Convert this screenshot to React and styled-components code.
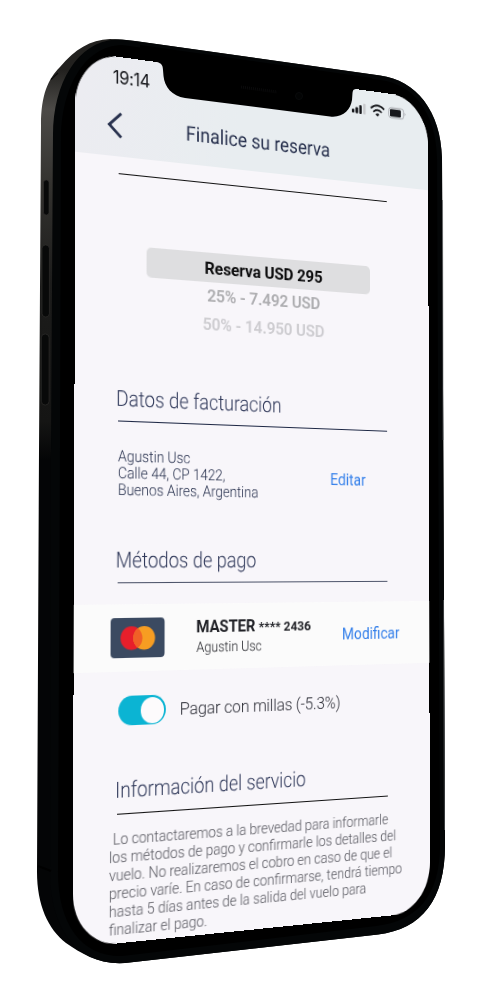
import React from "react";
import styled, { createGlobalStyle } from "styled-components";

const W = 390;
const H = 844;

// Solves the projective transform that carries the flat W x H screen onto a quad.
function quadMatrix([x0, y0], [x1, y1], [x2, y2], [x3, y3]) {
  const dx1 = x1 - x2, dx2 = x3 - x2, dx3 = x0 - x1 + x2 - x3;
  const dy1 = y1 - y2, dy2 = y3 - y2, dy3 = y0 - y1 + y2 - y3;
  const det = dx1 * dy2 - dx2 * dy1;
  const g = (dx3 * dy2 - dx2 * dy3) / det;
  const h = (dx1 * dy3 - dx3 * dy1) / det;
  const m = [
    (x1 - x0 + g * x1) / W, (y1 - y0 + g * y1) / W, 0, g / W,
    (x3 - x0 + h * x3) / H, (y3 - y0 + h * y3) / H, 0, h / H,
    0, 0, 1, 0,
    x0, y0, 0, 1,
  ];
  return `matrix3d(${m.map((n) => n.toFixed(9)).join(",")})`;
}

const tilt = quadMatrix([75.6, 51], [428, 98.9], [430, 911.5], [72.7, 948]);

const Global = createGlobalStyle`
  body { margin: 0; background: #fff; }
  * { box-sizing: border-box; }
`;

const Stage = styled.main`
  position: relative;
  width: 500px;
  height: 1000px;
  overflow: hidden;
  background: #fff;
  font-family: Roboto, "Liberation Sans", sans-serif;
`;

const Layer = styled.svg`
  position: absolute;
  inset: 0;
  width: 500px;
  height: 1000px;
`;

const Screen = styled.div`
  position: absolute;
  top: 0;
  left: 0;
  width: ${W}px;
  height: ${H}px;
  display: flex;
  flex-direction: column;
  overflow: hidden;
  border-radius: 45px / 50px;
  background: #f8f6fa;
  color: #27304d;
  white-space: nowrap;
  transform-origin: 0 0;
  transform: ${tilt};
`;

const Header = styled.header`
  height: 96.3px;
  flex: none;
  background: linear-gradient(100deg, #ececf1, #e8edf0 45%);
`;

const StatusBar = styled.div`
  height: 40px;
  padding: 0 27.5px 0 37.8px;
  display: flex;
  align-items: center;
  justify-content: space-between;
`;

const Clock = styled.span`
  font: 400 17px/20px Inter, Roboto, sans-serif;
  letter-spacing: -0.4px;
  color: #15161a;
`;

const NavBar = styled.div`
  height: 51px;
  padding-left: 31.5px;
  display: flex;
  align-items: center;
`;

const Title = styled.h1`
  margin: 0 0 0 66.8px;
  font-size: 20px;
  line-height: 26px;
  font-weight: 400;
  transform: scaleX(0.965);
  transform-origin: 0 50%;
`;

const Rule = styled.hr`
  margin: ${(p) => p.$top || 0}px 50.5px 0 43.5px;
  border: 0;
  height: ${(p) => p.$weight || 1.2}px;
  flex: none;
  background: ${(p) => p.$color || "#1d2744"};
`;

const Picker = styled.div`
  width: 247px;
  margin: 68px 0 0 72.8px;
  text-align: center;
`;

const Option = styled.div`
  height: ${(p) => (p.$selected ? 29.5 : 27.7)}px;
  line-height: ${(p) => (p.$selected ? 30 : 27.7)}px;
  padding-left: 6.5px;
  border-radius: 5px;
  background: ${(p) => (p.$selected ? "#dedee0" : "transparent")};
  color: ${(p) => p.$color};
  font-size: 17px;
  font-weight: ${(p) => (p.$selected ? 700 : 600)};
  letter-spacing: -0.13px;
`;

const Heading = styled.h2`
  margin: ${(p) => p.$top}px 0 8.3px 42.3px;
  color: #30395a;
  font-size: 21px;
  line-height: 26px;
  font-weight: 300;
  transform: scaleX(0.925);
  transform-origin: 0 50%;
`;

const Billing = styled.div`
  margin: 24.8px 0 0 43.5px;
  display: flex;
  align-items: center;
`;

const Address = styled.address`
  width: 230px;
  font-style: normal;
  font-weight: 300;
  font-size: 15px;
  line-height: 16.3px;
  transform: scaleX(0.955);
  transform-origin: 0 50%;
`;

const Link = styled.a`
  color: #3580ea;
  font-size: 16px;
  line-height: 18px;
  padding-top: ${(p) => p.$drop || 0}px;
`;

const CardRow = styled.div`
  height: 64px;
  margin-top: 19.5px;
  padding-left: 37px;
  display: flex;
  align-items: center;
  background: #fbfbfb;
`;

const CardText = styled.div`
  width: 161px;
  margin-left: 33.3px;
  color: #202126;
`;

const CardName = styled.div`
  font-size: 16px;
  line-height: 20px;
  font-weight: 700;
  letter-spacing: -0.05px;
`;

const Digits = styled.span`
  font-size: 13.4px;
`;

const Holder = styled.div`
  font-size: 14px;
  line-height: 16px;
  font-weight: 300;
  transform: scaleX(0.96);
  transform-origin: 0 50%;
`;

const MilesRow = styled.label`
  margin: 23.5px 0 0 45px;
  height: 28px;
  display: flex;
  align-items: center;
  gap: 14.5px;
  color: #2b2c35;
  font-size: 17px;
  font-weight: 300;
  letter-spacing: -0.13px;
`;

const Switch = styled.span`
  width: 49px;
  height: 28px;
  padding: 1.7px;
  display: flex;
  justify-content: flex-end;
  border-radius: 14px;
  background: #0bb4d3;
`;

const Knob = styled.span`
  width: 24.6px;
  height: 24.6px;
  border-radius: 50%;
  background: #fdfbfc;
`;

const Notice = styled.p`
  margin: 15.6px 0 0 36px;
  color: #56565e;
  font-size: 15px;
  line-height: 17px;
  font-weight: 300;
  transform: scaleX(0.955);
  transform-origin: 0 50%;
`;

const Line = styled.span`
  display: block;
  text-indent: ${(p) => (p.$first ? 4 : 0)}px;
`;

const StatusIcons = () => (
  <svg width="64" height="16" viewBox="0 0 64 16">
    <g fill="#17181c">
      <rect x="0" y="8.5" width="3" height="4" rx="1" />
      <rect x="4.3" y="6.5" width="3" height="6.2" rx="1" />
      <rect x="8.7" y="4" width="3" height="8.9" rx="1" />
      <rect x="13.2" y="2" width="3" height="11" rx="1" fill="#c9cacd" />
    </g>
    <g fill="none" stroke="#17181c" strokeWidth="1.8">
      <path d="M22.2 5.5q8-7 16 0" />
      <path d="M25.2 8.9q5-4.3 10 0" />
    </g>
    <path d="M27.8 11.2q2.4-1.8 4.8 0l-2.4 2.4z" fill="#17181c" />
    <rect x="43.6" y="2.3" width="18" height="10.6" rx="3" fill="none" stroke="#a9abb0" strokeWidth="1" />
    <rect x="45" y="3.8" width="13" height="7.8" rx="1.4" fill="#17181c" />
    <path d="M62.6 5.8q1.8 1.8 0 3.6z" fill="#a9abb0" />
  </svg>
);

const Back = () => (
  <svg width="16" height="26" viewBox="0 0 16 26" fill="none" stroke="#27304d" strokeWidth="2.8">
    <path d="M14.5 1.5 2.3 13l12.2 11.5" />
  </svg>
);

const Mastercard = () => (
  <svg width="55.500" height="38" viewBox="0 0 56 38" preserveAspectRatio="none">
    <rect width="56" height="38" rx="4" fill="#3b4a61" />
    <circle cx="21.5" cy="19.3" r="11.3" fill="#e71f2b" />
    <circle cx="34.7" cy="19.3" r="11.3" fill="#f79d22" />
    <path d="M28.1 10.1a11.3 11.3 0 0 1 0 18.4a11.3 11.3 0 0 1 0-18.4" fill="#f06027" />
  </svg>
);

const Chassis = () => (
  <Layer viewBox="0 0 500 1000">
    <defs>
      <linearGradient id="side" x1="0" y1="70" x2="0" y2="460" gradientUnits="userSpaceOnUse">
        <stop offset="0" stopColor="#22211f" />
        <stop offset=".1" stopColor="#4c4a47" />
        <stop offset=".3" stopColor="#33322f" />
        <stop offset=".55" stopColor="#1c1c1b" />
        <stop offset=".9" stopColor="#151514" />
        <stop offset="1" stopColor="#040506" />
      </linearGradient>
    </defs>
    <path
      d="M41 125C41 95 48 79 60 67C75 49 90 40 110 39Q122 39 135 41L380 75.5C416 80 441 111 442 158L445 845C445 900 422 929 378 934.5L125 963C100 965 82 954 66 943C48 929 37 905 37 872L39 450Z"
      fill="url(#side)"
    />
    <path
      d="M53 135C53 83 78 42 115 39.5Q122 39 135 41L380 75.5C416 80 441 111 442 158L445 845C445 900 422 929 378 934.5L125 963C76 966 50 928 50 872L51 450Z"
      fill="#040607"
    />
    <path
      d="M61 140C61 88 84 46 122 45L380 80C413 84 436 112 437 158L440 845C440 895 418 921 376 926L122 956C82 957 58 925 58 872L60 450Z"
      fill="#000"
    />
    <g fill="#080909" stroke="#343330" strokeWidth=".6">
      <rect x="43.5" y="180" width="5.5" height="35" rx="2.7" />
      <rect x="42" y="245" width="7.4" height="72" rx="3.6" />
      <rect x="41.3" y="334" width="7.8" height="71" rx="3.8" />
    </g>
    <path d="M51 79.500l7-6.500" stroke="#0b0b0b" strokeWidth="1.2" />
    <path d="M38 866l13 5" stroke="#000" strokeWidth="2" />
    <path d="M442.5 200 443 440M443.5 600 444.5 830" stroke="#55575a" strokeWidth=".7" />
  </Layer>
);

const Notch = () => (
  <Layer viewBox="0 0 500 1000">
    <path
      d="M140 55L157 62C161.500 63.500 162.800 65 163 70L163.500 76C164.500 87 172 96 185 98L330 116.500C343 118 350.500 110 352 100L352.500 93C353 89.500 354 88.800 358 89L372 88L372 78L140 45Z"
      fill="#000"
    />
    <path d="M241 87l36 5" stroke="#0a0a0b" strokeWidth="3" strokeDasharray="1 1" />
    <circle cx="299" cy="96" r="3.5" fill="#030404" stroke="#090a0b" />
  </Layer>
);

export default function App() {
  return (
    <Stage>
      <Global />
      <Chassis />
      <Screen>
        <Header>
          <StatusBar>
            <Clock>19:14</Clock>
            <StatusIcons />
          </StatusBar>
          <NavBar>
            <Back />
            <Title>Finalice su reserva</Title>
          </NavBar>
        </Header>
        <Rule $top={15.4} $color="#111" $weight={1} />
        <Picker>
          <Option $selected $color="#0c0c0d">Reserva USD 295</Option>
          <Option $color="#adadb0">25% - 7.492 USD</Option>
          <Option $color="#cdccd0">50% - 14.950 USD</Option>
        </Picker>
        <Heading $top={49}>Datos de facturación</Heading>
        <Rule />
        <Billing>
          <Address>
            Agustin Usc<br />
            Calle 44, CP 1422,<br />
            Buenos Aires, Argentina
          </Address>
          <Link $drop={3}>Editar</Link>
        </Billing>
        <Heading $top={45.2}>Métodos de pago</Heading>
        <Rule $color="#4b5268" />
        <CardRow>
          <Mastercard />
          <CardText>
            <CardName>MASTER <Digits>**** 2436</Digits></CardName>
            <Holder>Agustin Usc</Holder>
          </CardText>
          <Link $drop={1.5}>Modificar</Link>
        </CardRow>
        <MilesRow>
          <Switch><Knob /></Switch>
          Pagar con millas (-5.3%)
        </MilesRow>
        <Heading $top={48}>Información del servicio</Heading>
        <Rule $color="#111" $weight={1} />
        <Notice>
          <Line $first>Lo contactaremos a la brevedad para informarle</Line>
          <Line>los métodos de pago y confirmarle los detalles del</Line>
          <Line>vuelo. No realizaremos el cobro en caso de que el</Line>
          <Line>precio varíe. En caso de confirmarse, tendrá tiempo</Line>
          <Line>hasta 5 días antes de la salida del vuelo para</Line>
          <Line>finalizar el pago.</Line>
        </Notice>
      </Screen>
      <Notch />
    </Stage>
  );
}
